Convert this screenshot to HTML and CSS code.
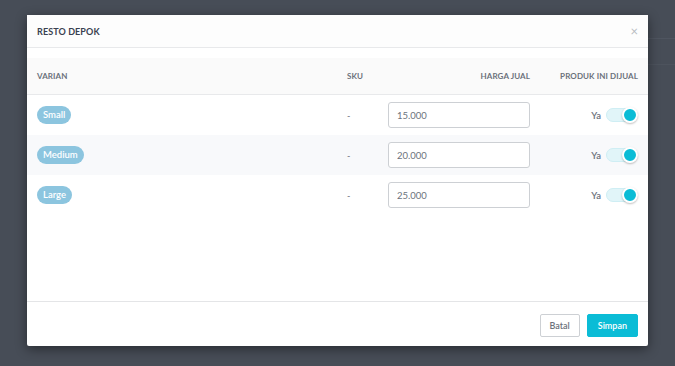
FILE: index.html
```html
<!DOCTYPE html>
<html lang="id">
  <head>
    <meta charset="UTF-8" />
    <meta name="viewport" content="width=device-width, initial-scale=1.0" />
    <title>Resto Depok - Varian</title>
    <link rel="stylesheet" href="styles.css">
  </head>
  <body>
    <!-- page behind the overlay -->
    <div class="page-bg">
      <div class="page-nav"></div>
      <div class="page-bar"></div>
    </div>

    <div class="modal">
      <div class="modal-header">
        <h5>RESTO DEPOK</h5>
        <span class="close">&times;</span>
      </div>

      <div class="modal-body">
        <table class="variant-table">
          <thead>
            <tr>
              <th class="col-name">VARIAN</th>
              <th class="col-sku">SKU</th>
              <th class="col-price">HARGA JUAL</th>
              <th class="col-sold">PRODUK INI DIJUAL</th>
            </tr>
          </thead>
          <tbody>
            <tr>
              <td><span class="badge">Small</span></td>
              <td class="sku">-</td>
              <td class="col-price"><input class="price-input" type="text" value="15.000" /></td>
              <td class="col-sold">
                <label class="switch"><span class="switch-label">Ya</span><span class="track"><span class="knob"></span></span></label>
              </td>
            </tr>
            <tr>
              <td><span class="badge">Medium</span></td>
              <td class="sku">-</td>
              <td class="col-price"><input class="price-input" type="text" value="20.000" /></td>
              <td class="col-sold">
                <label class="switch"><span class="switch-label">Ya</span><span class="track"><span class="knob"></span></span></label>
              </td>
            </tr>
            <tr>
              <td><span class="badge">Large</span></td>
              <td class="sku">-</td>
              <td class="col-price"><input class="price-input" type="text" value="25.000" /></td>
              <td class="col-sold">
                <label class="switch"><span class="switch-label">Ya</span><span class="track"><span class="knob"></span></span></label>
              </td>
            </tr>
          </tbody>
        </table>
      </div>

      <div class="modal-footer">
        <button class="btn btn-outline">Batal</button>
        <button class="btn btn-primary">Simpan</button>
      </div>
    </div>
  </body>
</html>
```

FILE: styles.css
```css
body {
  margin: 0;
  padding: 15px 27px 20px;
  background: #474d57;
  font-family: Lato, "Open Sans", sans-serif;
  color: #3f4650;
  height: 366px;
  box-sizing: border-box;
  overflow: hidden;
}

.page-bg {
  position: absolute;
  inset: 0 0 0 600px;
  z-index: 0;
}

.page-nav {
  height: 38px;
  border-bottom: 1px solid #4f5560;
}

.page-bar {
  height: 25px;
  border-bottom: 1px solid #4d535d;
}

.modal {
  position: relative;
  z-index: 1;
  display: flex;
  flex-direction: column;
  height: 331px;
  background: #fff;
  border-radius: 2px;
  box-shadow: 0 3px 12px rgba(0, 0, 0, 0.45);
}

.modal-header {
  display: flex;
  align-items: center;
  justify-content: space-between;
  height: 32px;
  padding: 0 10px;
  border-bottom: 1px solid #e8e9eb;
  background: #fdfdfd;
}

.modal-header h5 {
  margin: 0;
  font-size: 9px;
  font-weight: 700;
  color: #3a4150;
  letter-spacing: 0.1px;
}

.close {
  font-size: 13px;
  color: #b8bcc2;
  line-height: 1;
}

.modal-body {
  flex: 1;
  padding-top: 10px;
}

.variant-table {
  width: 100%;
  border-collapse: collapse;
}

.variant-table th {
  height: 36px;
  padding: 0 10px;
  background: #fafafa;
  border-bottom: 1px solid #e8e9eb;
  font-size: 8px;
  font-weight: 700;
  color: #6b717b;
  text-align: left;
  letter-spacing: 0.1px;
}

.variant-table td {
  height: 40px;
  padding: 0 10px;
  font-size: 9px;
  color: #6c727c;
}

.variant-table tbody tr:nth-child(even) td {
  background: #f8f9fb;
}

.col-name {
  width: 290px;
}

.col-sku {
  width: 21px;
}

.variant-table .col-price {
  width: 142px;
  text-align: right;
}

.variant-table .col-sold {
  text-align: right;
}

.sku {
  color: #7a8089;
}

.badge {
  display: inline-block;
  padding: 0 6px;
  height: 18px;
  line-height: 18px;
  border-radius: 9px;
  background: #8cc5df;
  color: #fff;
  font-size: 9.5px;
  font-weight: 600;
  vertical-align: middle;
}

.price-input {
  display: block;
  box-sizing: border-box;
  width: 142px;
  height: 26px;
  padding: 0 8px;
  border: 1px solid #cdd0d4;
  border-radius: 3px;
  font-family: inherit;
  font-size: 9.5px;
  color: #6c727c;
  background: #fff;
}

.switch {
  display: inline-flex;
  align-items: center;
  gap: 5px;
  vertical-align: middle;
}

.switch-label {
  font-size: 9.5px;
  font-weight: 600;
  color: #6c727c;
}

.track {
  position: relative;
  display: inline-block;
  box-sizing: border-box;
  width: 32px;
  height: 14px;
  border-radius: 7px;
  background: #e1f5f9;
  border: 1px solid #cfeef4;
}

.knob {
  position: absolute;
  right: -1px;
  top: -2px;
  box-sizing: border-box;
  width: 16px;
  height: 16px;
  border-radius: 50%;
  background: #0bbcd6;
  border: 2px solid #fff;
  box-shadow: 0 1px 2px rgba(0, 0, 0, 0.25);
}

.modal-footer {
  display: flex;
  justify-content: flex-end;
  gap: 7px;
  height: 45px;
  box-sizing: border-box;
  padding: 12px 10px 0;
  border-top: 1px solid #e4e5e7;
}

.btn {
  height: 23px;
  padding: 0 9px;
  border-radius: 2px;
  font-family: inherit;
  font-size: 9px;
  font-weight: 600;
}

.btn-outline {
  border: 1px solid #cdd0d4;
  background: #fff;
  color: #6c727c;
}

.btn-primary {
  border: 1px solid #0bbcd6;
  background: #0bbcd6;
  color: #fff;
  padding: 0 10px;
}
```
